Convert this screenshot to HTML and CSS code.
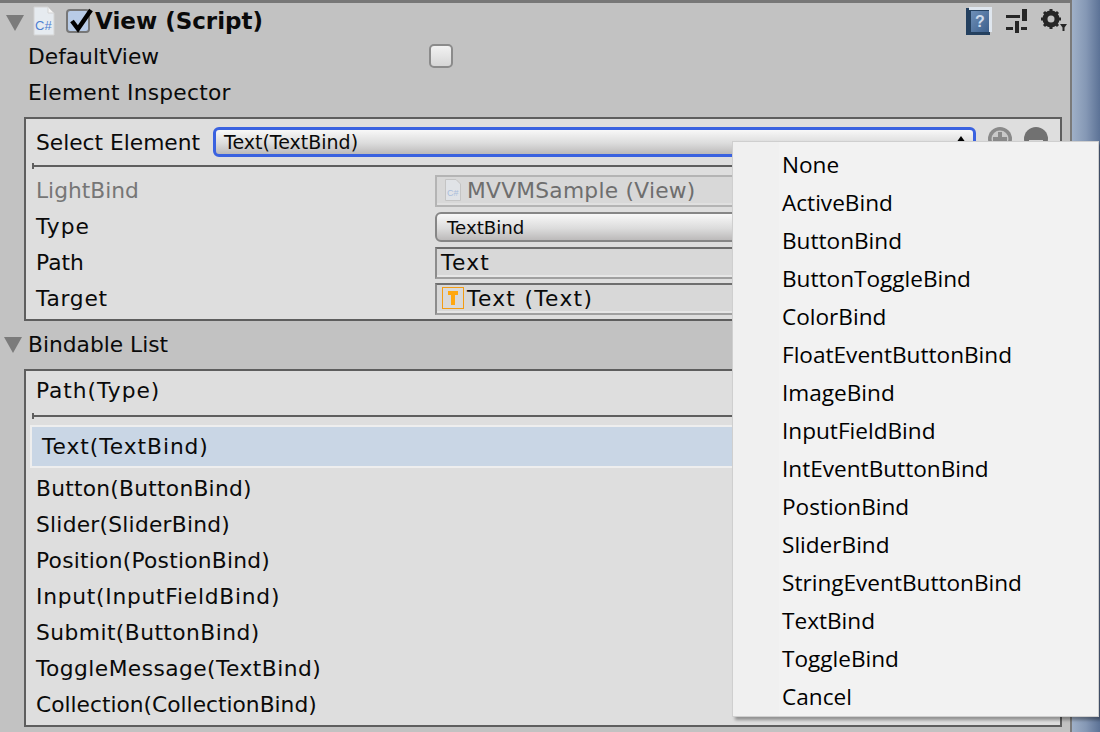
FILE: index.html
```html
<!DOCTYPE html>
<html lang="en">
<head>
    <meta charset="UTF-8">
    <title>View (Script)</title>
    <link rel="stylesheet" href="styles.css">
</head>
<body>
    <div class="window">
        <div class="inspector">
            <div class="header">
                <span class="tri"></span>
                <svg class="cs-icon" width="22" height="30" viewBox="0 0 22 30">
                    <path d="M1 1H15L21 7V29H1Z" fill="#e6ebf0" stroke="#d4d4d4"/>
                    <path d="M15 1V7H21Z" fill="#f6f6f6" stroke="#d4d4d4"/>
                    <text x="2" y="24" class="cs-text">C#</text>
                </svg>
                <span class="check">
                    <svg width="26" height="26" viewBox="0 0 26 26"><path d="M4 14L10 22L23 3" fill="none" stroke="#000" stroke-width="4.5"/></svg>
                </span>
                <span class="title">View (Script)</span>
                <span class="header-icons">
                    <svg width="28" height="28" viewBox="0 0 28 28">
                        <defs>
                            <linearGradient id="helpBlue" x1="0" y1="0" x2="1" y2="1">
                                <stop offset="0" stop-color="#6f90b8"/>
                                <stop offset="1" stop-color="#3c5f8c"/>
                            </linearGradient>
                        </defs>
                        <rect x="0" y="1" width="24" height="27" fill="#24405f"/>
                        <path d="M3 0H26V25H23V3H3Z" fill="#dfe6ee"/>
                        <rect x="5" y="4" width="18" height="21" fill="url(#helpBlue)"/>
                        <text x="9" y="20" class="help-text">?</text>
                    </svg>
                    <svg width="22" height="24" viewBox="0 0 22 24">
                        <path d="M0 6H14V9H0ZM16 0H21V12H16ZM0 18H7V21H0ZM9 12H13V24H9ZM15 18H21V21H15Z" fill="#262626"/>
                    </svg>
                    <svg width="28" height="24" viewBox="0 0 28 24">
                        <circle cx="11" cy="10" r="6" fill="none" stroke="#262626" stroke-width="5"/>
                        <path d="M11 0V20M1 10H21M4 3L18 17M18 3L4 17" stroke="#262626" stroke-width="3"/>
                        <circle cx="11" cy="10" r="3.5" fill="#c2c2c2"/>
                        <path d="M20 15H27L23.5 20Z M22.5 18H24.500V22H22.500Z" fill="#262626"/>
                    </svg>
                </span>
            </div>

            <div class="row row-plain">
                <span class="label-col">DefaultView</span>
                <span class="toggle"></span>
            </div>
            <div class="row row-plain row-second wide-1">Element Inspector</div>

            <div class="box box-element">
                <div class="select-row">
                    <span class="select-label">Select Element</span>
                    <div class="popup popup-focus">
                        <span>Text(TextBind)</span>
                        <span class="arrows"></span>
                    </div>
                    <div class="round-btns">
                        <svg width="24" height="24" viewBox="0 0 24 24"><circle cx="12" cy="12" r="12" fill="#8a8a8a"/><circle cx="12" cy="12" r="8.500" fill="#c9c9c9"/><path d="M10 5H14V10H19V14H14V19H10V14H5V10H10Z" fill="#8a8a8a"/></svg>
                        <svg width="24" height="24" viewBox="0 0 24 24"><circle cx="12" cy="12" r="12" fill="#717171"/><rect x="5" y="13" width="14" height="5" fill="#d8d8d8"/></svg>
                    </div>
                </div>
                <div class="rule"></div>
                <div class="field-row field-row-disabled">
                    <span class="label-inner">LightBind</span>
                    <div class="field field-disabled">
                        <svg width="16" height="22" viewBox="0 0 16 22">
                            <path d="M.5.500H11L15.500 5V21.500H.500Z" fill="#e0e3e7" stroke="#c4c4c4"/>
                            <text x="2" y="17" class="cs-text-small">C#</text>
                        </svg>
                        <span class="wide-1">MVVMSample (View)</span>
                    </div>
                </div>
                <div class="field-row">
                    <span class="label-inner wide-4">Type</span>
                    <div class="popup popup-small"><span>TextBind</span></div>
                </div>
                <div class="field-row">
                    <span class="label-inner">Path</span>
                    <div class="field field-text"><span class="wide-5">Text</span></div>
                </div>
                <div class="field-row">
                    <span class="label-inner wide-3">Target</span>
                    <div class="field field-target">
                        <svg class="t-icon" width="22" height="22" viewBox="0 0 22 22">
                            <rect x=".5" y=".5" width="21" height="21" fill="#d9d9d9" stroke="#f39c12"/>
                            <path d="M6 4H16V8H13V18H9V8H6Z" fill="#ffa70f"/>
                        </svg>
                        <span class="wide-5">Text (Text)</span>
                    </div>
                </div>
            </div>

            <div class="foldout">
                <span class="tri tri-list"></span>
                <span>Bindable List</span>
            </div>

            <div class="box box-list">
                <div class="list-head wide-4">Path(Type)</div>
                <div class="rule"></div>
                <div class="list-selected wide-4">Text(TextBind)</div>
                <ul class="list-items">
                    <li class="wide-1">Button(ButtonBind)</li>
                    <li class="wide-1">Slider(SliderBind)</li>
                    <li class="wide-1">Position(PostionBind)</li>
                    <li class="wide-3">Input(InputFieldBind)</li>
                    <li class="wide-2">Submit(ButtonBind)</li>
                    <li class="wide-2">ToggleMessage(TextBind)</li>
                    <li>Collection(CollectionBind)</li>
                </ul>
            </div>
        </div>
        <div class="scrollbar"></div>
    </div>

    <ul class="menu">
        <li>None</li>
        <li>ActiveBind</li>
        <li>ButtonBind</li>
        <li>ButtonToggleBind</li>
        <li>ColorBind</li>
        <li>FloatEventButtonBind</li>
        <li>ImageBind</li>
        <li>InputFieldBind</li>
        <li>IntEventButtonBind</li>
        <li>PostionBind</li>
        <li>SliderBind</li>
        <li>StringEventButtonBind</li>
        <li>TextBind</li>
        <li>ToggleBind</li>
        <li>Cancel</li>
    </ul>
</body>
</html>
```

FILE: styles.css
```css
html, body {
    margin: 0;
    height: 100%;
    overflow: hidden;
}
body {
    font-family: "DejaVu Sans", Verdana, sans-serif;
    font-size: 21.75px;
    color: #0a0a0a;
    background-color: #c2c2c2;
    position: relative;
}
ul {
    list-style: none;
    margin: 0;
    padding: 0;
}
.window {
    display: flex;
    height: 732px;
}
.inspector {
    flex: none;
    width: 1072px;
    height: 732px;
    box-sizing: border-box;
    border-top: 3px solid #777;
    border-right: 2px solid #7a7a7a;
}
.scrollbar {
    flex: 1;
    background: linear-gradient(to right, #9fb0c8, #8598b5 50%, #5c7296);
}

/* the old IMGUI font is wider than DejaVu on some letters */
.wide-1 { letter-spacing: 0.25px; }
.wide-2 { letter-spacing: 0.45px; }
.wide-3 { letter-spacing: 0.75px; }
.wide-4 { letter-spacing: 0.95px; }
.wide-5 { letter-spacing: 1.3px; }

/* header */
.header {
    display: flex;
    align-items: center;
    height: 36px;
}
.tri {
    width: 0;
    height: 0;
    border-left: 9px solid transparent;
    border-right: 9px solid transparent;
    border-top: 16px solid #7b7b7b;
}
.header .tri {
    margin-left: 6px;
    margin-top: 4px;
}
.cs-icon {
    margin-left: 9px;
}
.cs-text {
    font-family: "Liberation Sans", Arial, sans-serif;
    font-size: 13px;
    fill: #4f7fd0;
}
.cs-text-small {
    font-family: "Liberation Sans", Arial, sans-serif;
    font-size: 9px;
    fill: #a9bddc;
}
.help-text {
    font-family: "Liberation Sans", Arial, sans-serif;
    font-size: 16px;
    font-weight: bold;
    fill: #cfdcec;
}
.check {
    box-sizing: border-box;
    width: 24px;
    height: 24px;
    margin-left: 11px;
    border: 2px solid #777;
    border-radius: 4px;
    background: #b8cbe6;
    position: relative;
}
.check svg {
    position: absolute;
    left: 0;
    top: -4px;
}
.title {
    font-weight: bold;
    font-size: 23px;
    margin-left: 5px;
}
.header-icons {
    margin-left: auto;
    margin-right: 2px;
    display: flex;
    align-self: flex-start;
    align-items: flex-start;
    gap: 12px;
    margin-top: 4px;
}
.header-icons svg + svg {
    margin-top: 2px;
}

/* plain rows */
.row-plain {
    display: flex;
    align-items: center;
    height: 34px;
    padding-left: 28px;
}
.row-second {
    height: 38px;
}
.label-col {
    width: 401px;
}
.toggle {
    box-sizing: border-box;
    width: 24px;
    height: 24px;
    border: 2px solid #8b8b8b;
    border-radius: 5px;
    background: linear-gradient(#f2f2f2, #d6d6d6);
}

/* boxes */
.box {
    box-sizing: border-box;
    width: 1038px;
    margin-left: 24px;
    border: 2px solid #5e5e5e;
    background-color: #dedede;
}
.box-element {
    height: 204px;
    margin-top: 6px;
}
.box-list {
    height: 358px;
}
.select-row {
    display: flex;
    align-items: center;
    height: 46px;
    padding-left: 10px;
}
.select-label {
    width: 177px;
    flex: none;
}
.popup {
    box-sizing: border-box;
    display: flex;
    align-items: center;
    justify-content: space-between;
    padding-left: 10px;
    border-radius: 6px;
    background: linear-gradient(#f8f8f8, #dcdcdc 55%, #bcbaba);
}
.popup-focus {
    width: 763px;
    height: 30px;
    font-size: 19px;
    border: 3px solid #3a62e0;
    padding-left: 8px;
    padding-right: 7px;
}
.popup-small {
    width: 622px;
    height: 30px;
    font-size: 18.2px;
    border: 2px solid #868686;
}
.arrows {
    width: 0;
    height: 0;
    margin-bottom: 6px;
    border-left: 5px solid transparent;
    border-right: 5px solid transparent;
    border-bottom: 7px solid #000;
}
.round-btns {
    display: flex;
    gap: 12px;
    margin-left: 12px;
    margin-bottom: 6px;
}
.rule {
    height: 2px;
    margin-left: 6px;
    margin-right: 12px;
    background-color: #5e5e5e;
    position: relative;
}
.rule::before {
    content: "";
    position: absolute;
    left: 0;
    top: -2px;
    width: 2px;
    height: 6px;
    background-color: #5e5e5e;
}

/* property rows */
.field-row {
    display: flex;
    align-items: center;
    height: 36px;
    padding-left: 10px;
}
.field-row-disabled {
    margin-top: 6px;
}
.field-row-disabled .label-inner {
    color: #767676;
}
.label-inner {
    width: 399px;
    flex: none;
    padding-bottom: 2px;
}
.field {
    box-sizing: border-box;
    width: 622px;
    height: 32px;
    padding-bottom: 2px;
    display: flex;
    align-items: center;
    background-color: #d8d8d8;
    border: 2px solid #a0a0a0;
    border-top-color: #6e6e6e;
    border-left-color: #8c8c8c;
    box-shadow: inset 0 -2px 0 #e6e6e6;
}
.field-disabled {
    border-color: #b4b4b4;
    color: #6e6e6e;
    padding-left: 8px;
    gap: 6px;
    box-shadow: inset 0 -2px 0 #e0e0e0;
}
.field-text {
    padding-left: 4px;
}
.field-target {
    padding-left: 5px;
    gap: 3px;
}
.t-icon {
    flex: none;
}

/* bindable list */
.foldout {
    display: flex;
    align-items: center;
    box-sizing: border-box;
    height: 48px;
    padding-bottom: 2px;
    gap: 6px;
}
.tri-list {
    margin-left: 4px;
    margin-top: 2px;
}
.list-head {
    box-sizing: border-box;
    height: 44px;
    padding: 0 0 6px 10px;
    display: flex;
    align-items: center;
}
.list-selected {
    box-sizing: border-box;
    height: 43px;
    margin: 8px 4px 0;
    padding-left: 10px;
    display: flex;
    align-items: center;
    background-color: #c9d6e5;
    border: 2px solid #eeeeee;
}
.list-items {
    margin-top: 2px;
}
.list-items li {
    height: 36px;
    padding-left: 10px;
    display: flex;
    align-items: center;
}

/* context menu */
.menu {
    position: absolute;
    left: 732px;
    top: 141px;
    width: 367px;
    height: 576px;
    box-sizing: border-box;
    padding: 4px 0 0 49px;
    background: linear-gradient(to right, #f0f0f0 46px, #f2f2f2 46px);
    border: 1px solid #cfcfcf;
    box-shadow: 3px 3px 3px rgba(0, 0, 0, 0.35);
    font-family: "Open Sans", sans-serif;
    font-size: 22.6px;
    color: #000;
}
.menu li {
    height: 38px;
    line-height: 38px;
}
```
